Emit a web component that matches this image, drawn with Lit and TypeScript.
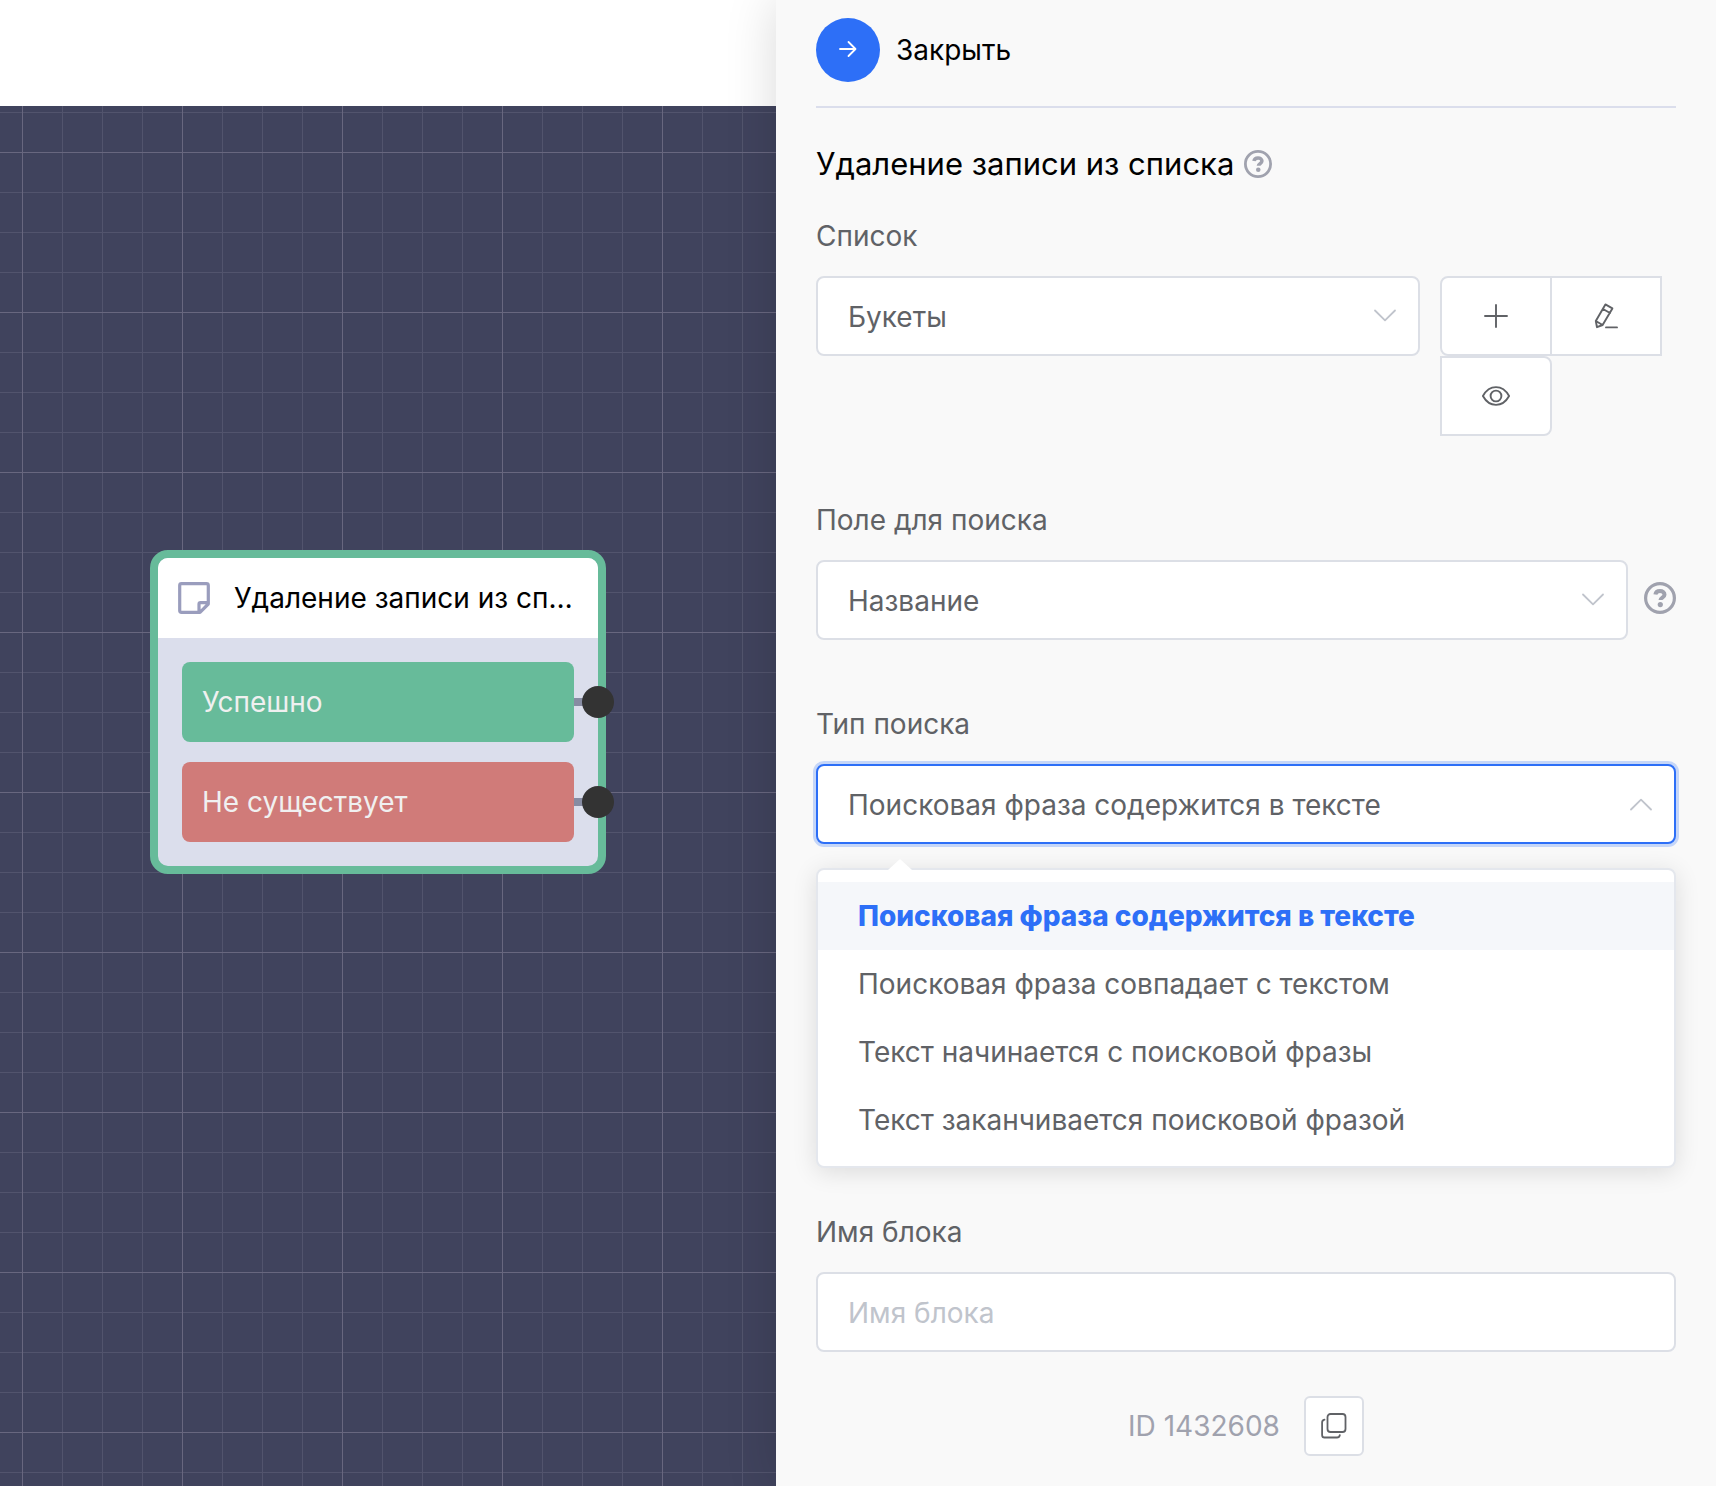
import { LitElement, html, css, svg } from "lit";
import { customElement, property, state } from "lit/decorators.js";

const FONT = css`Inter, "Liberation Sans", sans-serif`;

const helpIcon = html`<svg class="svg" viewBox="0 0 32 32" fill="none" aria-hidden="true">
  <circle cx="16" cy="16" r="14.4" stroke="currentColor" stroke-width="3.2" />
  <path d="M11.4 12.6c.3-2.300 2-3.600 4.600-3.600s4.500 1.500 4.500 3.700c0 2.900-4 3-4 5.400" stroke="currentColor" stroke-width="4" />
  <circle cx="16.300" cy="22.600" r="2.600" fill="currentColor" />
</svg>`;

const stroke = (d: unknown, width = 2, box = 28) => html`<svg
  class="svg" viewBox="0 0 ${box} ${box}" fill="none" stroke="currentColor"
  stroke-width=${width} stroke-linecap="round" stroke-linejoin="round" aria-hidden="true">${d}</svg>`;

const arrowIcon = stroke(svg`<path d="M6 13H21M14.500 6L21.500 13L14.500 20" />`, 1.8);
const plusIcon = stroke(svg`<path d="M14 3V25M3 14H25" />`, 1.9);
const editIcon = stroke(svg`<path d="M13.4 2.4L20.4 6.4L10.6 23L5 25.2L3.8 19L13.4 2.4ZM11 7L18 11M3.8 19L10.6 23M14 25.4H25" />`, 1.9);
const eyeIcon = stroke(svg`<path d="M.9 14C7.5 2.200 20.500 2.200 27.100 14C20.500 25.800 7.500 25.800 .9 14Z" /><circle cx="14" cy="14" r="5.400" />`, 1.9);
const copyIcon = stroke(svg`<rect x="7.500" y="2" width="18" height="18" rx="3" /><path d="M4.500 7.700C2.900 8.100 2.100 9 2.100 10.500V22.900C2.100 24.500 3 25.500 4.500 25.500H17C18.500 25.500 19.500 24.700 19.800 23.200" />`, 1.8);
const chevron = stroke(svg`<path d="M4 8.500L14 18.300L24 8.500" />`, 1.8);
const noteIcon = stroke(svg`<path d="M3.500 1.700H28.500Q30.300 1.700 30.300 3.500V22L22 30.300H3.500Q1.700 30.300 1.700 28.500V3.500Q1.700 1.700 3.500 1.700ZM30 20.700H22.500Q21 20.700 21 22.200V30" />`, 3.2, 32);

@customElement("flow-node")
class FlowNode extends LitElement {
  @property() heading = "";

  static styles = css`
    :host { display: block; }
    .node { border: 8px solid #67bb9a; border-radius: 18px; background: #dbdeec; font: 28px/40px ${FONT}; }
    .head { display: flex; align-items: center; gap: 24px; height: 80px; padding: 0 20px; background: #fff; border-radius: 10px 10px 0 0; }
    .icon { flex: none; width: 32px; height: 32px; color: #9a9dbd; }
    .svg { display: block; width: 100%; height: 100%; }
    .title { flex: 1; margin: 0; font: inherit; color: #000; overflow: hidden; text-overflow: ellipsis; white-space: nowrap; }
    .outs { display: flex; flex-direction: column; gap: 20px; margin: 0; padding: 24px; list-style: none; }
    .out { position: relative; display: flex; align-items: center; height: 80px; padding: 0 20px; border-radius: 8px; color: #f0f0f0; }
    .ok { background: #67bb9a; }
    .bad { background: #d07b79; }
    .out::before { content: ""; position: absolute; left: 100%; width: 16px; height: 8px; background: #878ca3; }
    .port { position: absolute; right: -40px; width: 32px; height: 32px; padding: 0; border: 0; border-radius: 50%; background: #333; }
  `;

  render() {
    return html`<article class="node">
      <header class="head"><span class="icon">${noteIcon}</span><h2 class="title">${this.heading}</h2></header>
      <ul class="outs">
        <li class="out ok">Успешно<button class="port" aria-label="Успешно"></button></li>
        <li class="out bad">Не существует<button class="port" aria-label="Не существует"></button></li>
      </ul>
    </article>`;
  }
}

@customElement("app-root")
class AppRoot extends LitElement {
  @state() private mode = 0;

  private readonly modes = [
    "Поисковая фраза содержится в тексте",
    "Поисковая фраза совпадает с текстом",
    "Текст начинается с поисковой фразы",
    "Текст заканчивается поисковой фразой",
  ];

  static styles = css`
    :host { display: block; font: 28px/40px ${FONT}; color: #606266; }
    * { box-sizing: border-box; }
    button, input, select { font: inherit; color: inherit; }
    .svg { display: block; width: 100%; height: 100%; }
    .page { display: grid; grid-template-columns: minmax(0, 1fr) 940px; min-height: 100vh; overflow: hidden; }
    .work { display: flex; flex-direction: column; }
    .topbar { height: 106px; background: #fff; }
    .canvas {
      position: relative; flex: 1; background-color: #40435d;
      background-image:
        linear-gradient(90deg, #68677f 1px, transparent 1px),
        linear-gradient(#68677f 1px, transparent 1px),
        linear-gradient(90deg, #52546d 1px, transparent 1px),
        linear-gradient(#52546d 1px, transparent 1px);
      background-size: 160px 160px, 160px 160px, 40px 40px, 40px 40px;
      background-position: 22px 46px, 22px 46px, 22px 6px, 22px 6px;
    }
    .placed { position: absolute; left: 150px; top: 444px; width: 456px; }
    .panel { position: relative; padding: 18px 40px 30px; background: #f9f9f9; box-shadow: 0 0 48px rgba(0, 0, 0, 0.15); }
    .close { display: flex; align-items: center; gap: 16px; width: 100%; padding: 0 0 24px; border: 0; border-bottom: 2px solid #dbdeec; background: none; color: #000; text-align: left; }
    .disc { display: grid; place-items: center; width: 64px; height: 64px; border-radius: 50%; background: #2d6ff7; color: #fff; }
    .arrow { width: 28px; height: 28px; }
    .title-row { display: flex; align-items: center; gap: 10px; margin: 36px 0 32px; }
    .title { margin: 0; font-size: 31px; font-weight: 400; line-height: 40px; color: #000; }
    .help { flex: none; width: 28px; height: 28px; padding: 0; border: 0; background: none; color: #a0a2ae; }
    .help.big { width: 32px; height: 32px; margin-bottom: 4px; }
    .label { display: block; width: max-content; margin-bottom: 20px; }
    .row { display: flex; }
    .list-row { gap: 20px; margin-bottom: 64px; }
    .field-row { gap: 16px; align-items: center; margin-bottom: 64px; }
    .control { position: relative; flex: 1; min-width: 0; }
    .box { display: block; width: 100%; height: 80px; padding: 2px 30px 0; border: 2px solid #dcdfe6; border-radius: 8px; background: #fff; appearance: none; outline: 0; }
    .box::placeholder { color: #c0c4cc; opacity: 1; }
    .box.open { border-color: #2d6ff7; box-shadow: 0 0 0 3px rgba(45, 111, 247, 0.25); }
    .chev { position: absolute; right: 21px; top: 26px; width: 28px; height: 28px; color: #c0c4cc; pointer-events: none; }
    .chev.up { transform: rotate(180deg); }
    .group { display: flex; flex-wrap: wrap; align-content: flex-start; width: 236px; }
    .tool { display: grid; place-items: center; width: 112px; height: 80px; margin-right: -2px; padding: 0; border: 2px solid #dcdfe6; background: #fff; }
    .tool.first { border-radius: 8px 0 0 8px; }
    .tool.last { border-radius: 0 8px 8px 0; }
    .glyph { width: 28px; height: 28px; }
    .menu { position: relative; margin: 24px 0 44px; padding: 12px 0; border: 2px solid #e4e7ed; border-radius: 8px; background: #fff; box-shadow: 0 4px 24px rgba(0, 0, 0, 0.12); list-style: none; }
    .tip { position: absolute; left: 70px; top: -12px; width: 24px; height: 12px; color: #fff; }
    .option { padding: 14px 40px; cursor: pointer; }
    .option.on { background: #f5f7fa; color: #2d6ff7; font-weight: 800; }
    .foot { display: flex; justify-content: center; align-items: center; gap: 24px; margin-top: 44px; color: #a0a2ae; }
    .copy { display: grid; place-items: center; width: 60px; height: 60px; padding: 0; border: 2px solid #dcdfe6; border-radius: 6px; background: #fff; color: #606266; }
  `;

  render() {
    return html`<main class="page">
      <section class="work">
        <div class="topbar"></div>
        <div class="canvas"><flow-node class="placed" heading="Удаление записи из списка"></flow-node></div>
      </section>
      <aside class="panel">
        <button class="close"><span class="disc"><span class="arrow">${arrowIcon}</span></span>Закрыть</button>
        <div class="title-row">
          <h1 class="title">Удаление записи из списка</h1>
          <button class="help" aria-label="Справка">${helpIcon}</button>
        </div>
        <label class="label" for="list">Список</label>
        <div class="row list-row">
          <div class="control">
            <select class="box" id="list"><option>Букеты</option></select>
            <span class="chev">${chevron}</span>
          </div>
          <div class="group">
            <button class="tool first" aria-label="Добавить"><span class="glyph">${plusIcon}</span></button>
            <button class="tool" aria-label="Изменить"><span class="glyph">${editIcon}</span></button>
            <button class="tool last" aria-label="Просмотр"><span class="glyph">${eyeIcon}</span></button>
          </div>
        </div>
        <label class="label" for="field">Поле для поиска</label>
        <div class="row field-row">
          <div class="control">
            <select class="box" id="field"><option>Название</option></select>
            <span class="chev">${chevron}</span>
          </div>
          <button class="help big" aria-label="Справка">${helpIcon}</button>
        </div>
        <label class="label" for="mode">Тип поиска</label>
        <div class="control">
          <select class="box open" id="mode" @change=${(e: Event) => (this.mode = (e.target as HTMLSelectElement).selectedIndex)}>
            ${this.modes.map((m, i) => html`<option .selected=${i === this.mode}>${m}</option>`)}
          </select>
          <span class="chev up">${chevron}</span>
        </div>
        <ul class="menu" role="listbox" aria-label="Тип поиска">
          <svg class="tip" viewBox="0 0 24 12" aria-hidden="true"><path d="M0 12L12 1L24 12Z" fill="currentColor" /></svg>
          ${this.modes.map((m, i) => html`<li class="option ${i === this.mode ? "on" : ""}" role="option"
            aria-selected=${i === this.mode} @click=${() => (this.mode = i)}>${m}</li>`)}
        </ul>
        <label class="label" for="name">Имя блока</label>
        <input class="box" id="name" placeholder="Имя блока" />
        <div class="foot"><span>ID 1432608</span><button class="copy" aria-label="Копировать"><span class="glyph">${copyIcon}</span></button></div>
      </aside>
    </main>`;
  }
}
